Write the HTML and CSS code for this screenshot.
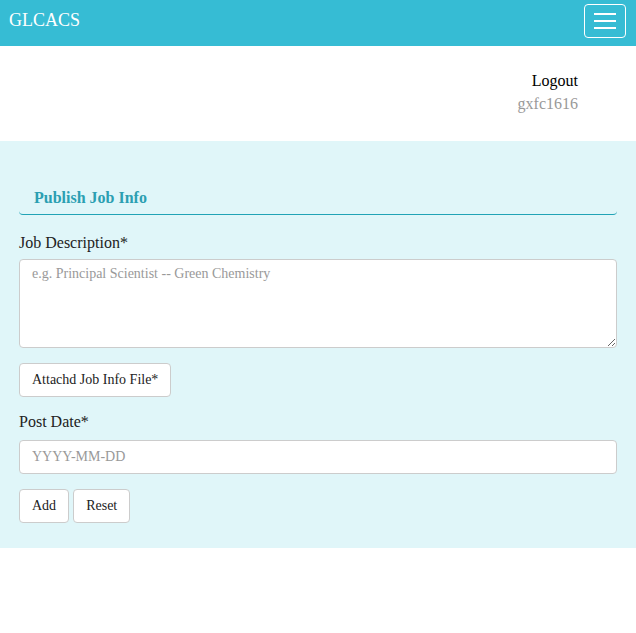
FILE: index.html
```html
<!DOCTYPE html>
<html>
<head>
<meta charset="utf-8">
<link rel="stylesheet" href="styles.css">
</head>
<body>
<nav class="navbar">
  <span class="brand">GLCACS</span>
  <button class="toggler" type="button" aria-label="menu">
    <span class="bar"></span><span class="bar"></span><span class="bar"></span>
  </button>
</nav>
<div class="userbox">
  <div class="user">
    <a class="logout">Logout</a>
    <span class="username">gxfc1616</span>
  </div>
</div>
<section class="panel">
  <h3 class="panel-title">Publish Job Info</h3>
  <form class="form">
    <label class="label label-first">Job Description*</label>
    <textarea class="control area" placeholder="e.g. Principal Scientist -- Green Chemistry"></textarea>
    <div class="row"><button type="button" class="btn">Attachd Job Info File*</button></div>
    <label class="label label-second">Post Date*</label>
    <input class="control input" placeholder="YYYY-MM-DD">
    <div class="row buttons">
      <button type="button" class="btn">Add</button>
      <button type="button" class="btn">Reset</button>
    </div>
  </form>
</section>
</body>
</html>
```
FILE: styles.css
```css
* { box-sizing: border-box; }
body {
  margin: 0;
  font-family: "Liberation Serif", "Times New Roman", serif;
  color: #222;
  background: #fff;
}
.navbar {
  height: 46px;
  background: #36bcd4;
  display: flex;
  align-items: center;
  justify-content: space-between;
  padding: 0 10px 0 9px;
}
.brand {
  color: #fff;
  font-size: 18px;
  margin-top: -6px;
}
.toggler {
  width: 42px;
  height: 34px;
  margin-top: -5px;
  background: transparent;
  border: 1px solid #fff;
  border-radius: 4px;
  display: flex;
  flex-direction: column;
  justify-content: center;
  align-items: center;
  gap: 5px;
  padding: 0;
}
.toggler .bar {
  display: block;
  width: 22px;
  height: 2px;
  background: #fff;
}
.userbox {
  height: 95px;
  display: flex;
  justify-content: flex-end;
  padding: 23px 58px 0 0;
}
.user {
  display: flex;
  flex-direction: column;
  align-items: flex-end;
  font-size: 16px;
  line-height: 23px;
}
.logout { color: #000; }
.username { color: #999; }
.panel {
  background: #e0f6f9;
  padding: 37px 19px 25px;
}
.panel-title {
  margin: 0;
  font-size: 16px;
  font-weight: bold;
  color: #2b9fb2;
  line-height: 20px;
  padding: 10px 15px 6px;
  border-bottom: 1px solid #21a3b6;
  border-radius: 0 0 4px 4px;
}
.form {
  display: flex;
  flex-direction: column;
}
.label {
  display: block;
  font-size: 16px;
  line-height: 20px;
}
.label-first {
  margin-top: 18px;
  margin-bottom: 6px;
}
.label-second {
  margin-top: 15px;
  margin-bottom: 8px;
}
.control {
  display: block;
  width: 100%;
  background: #fff;
  border: 1px solid #ccc;
  border-radius: 4px;
  font-family: "Liberation Serif", "Times New Roman", serif;
  font-size: 14px;
  color: #555;
  padding: 6px 12px;
}
.control::placeholder { color: #999; }
.area {
  height: 89px;
  resize: vertical;
}
.input { height: 34px; }
.row {
  display: flex;
  gap: 4px;
  margin-top: 15px;
}
.btn {
  height: 34px;
  background: #fff;
  border: 1px solid #ccc;
  border-radius: 4px;
  font-family: "Liberation Serif", "Times New Roman", serif;
  font-size: 14px;
  color: #222;
  padding: 6px 12px;
}
```
